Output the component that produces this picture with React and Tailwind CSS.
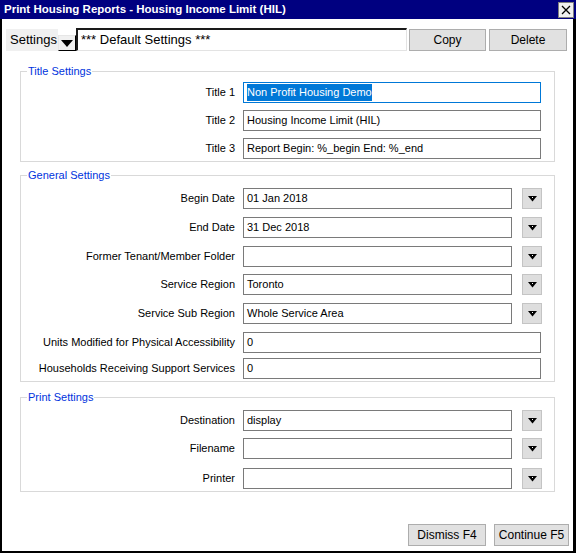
import React from 'react';

const font = { fontFamily: '"Liberation Sans", Arial, sans-serif' };

function Arrow() {
  return (
    <button className="w-[20px] h-[21px] shrink-0 flex items-center justify-center bg-[#dedede] border border-[#c4c4c4]">
      <svg width="9" height="6" viewBox="0 0 9 6">
        <polygon points="0,0 9,0 4.5,5.5" fill="#000" />
        <rect x="4" y="1" width="1" height="1" fill="#fff" />
      </svg>
    </button>
  );
}

function Row({ label, value = '', drop = false, selected = false, className = '' }) {
  return (
    <div className={`flex items-center h-[21px] ${className}`}>
      <div className="w-[214px] shrink-0 text-right text-[11px] text-black">{label}</div>
      <div
        className={`ml-[8px] h-full flex items-center px-[3px] text-[11px] text-black bg-white border ${
          selected ? 'border-[#0078d7]' : 'border-[#7a7a7a]'
        } ${drop ? 'w-[269px]' : 'w-[298px]'}`}
      >
        {selected ? <span className="bg-[#0078d7] text-white">{value}</span> : value}
      </div>
      {drop && <div className="ml-[10px]"><Arrow /></div>}
    </div>
  );
}

function Group({ title, children, className = '' }) {
  return (
    <fieldset className={`mx-[18px] border border-[#d9d9d9] ${className}`}>
      <legend className="ml-[6px] px-[1px] text-[11px] leading-[14px] text-[#0033dd]">{title}</legend>
      {children}
    </fieldset>
  );
}

export default function App() {
  return (
    <div className="w-[576px] h-[553px] bg-white flex flex-col" style={font}>
      <div className="h-[19px] shrink-0 bg-[#000080] flex items-center justify-between pl-[4px] pr-[2px]">
        <span className="text-white font-bold text-[11.5px]">Print Housing Reports - Housing Income Limit (HIL)</span>
        <button className="w-[16px] h-[16px] bg-[#f0f0f0] border border-[#808080] flex items-center justify-center">
          <svg width="10" height="10" viewBox="0 0 10 10">
            <path d="M1 1 L9 9 M9 1 L1 9" stroke="#000" strokeWidth="1.3" />
          </svg>
        </button>
      </div>

      <div className="flex-1 flex flex-col border-l-2 border-r-[3px] border-b-2 border-black">
        <div className="flex items-end mt-[9px] ml-[4px] h-[23px]">
          <div className="w-[52px] h-[22px] bg-[#f0f0f0] flex items-center pl-[4px] text-[13px] text-black">Settings</div>
          <button className="w-[18px] h-[16px] flex items-center justify-center bg-[#f0f0f0] border-r border-b border-black border-t border-l border-t-[#e6e6e6] border-l-[#e6e6e6]">
            <svg width="12" height="7" viewBox="0 0 12 7">
              <polygon points="0,0 12,0 6,7" fill="#000" />
            </svg>
          </button>
          <div className="w-[331px] h-[23px] flex items-center pl-[3px] text-[13px] text-black bg-white border-t-2 border-l-2 border-t-[#1a1a1a] border-l-[#1a1a1a] border-r border-b border-r-[#e3e3e3] border-b-[#e3e3e3]">
            *** Default Settings ***
          </div>
          <button className="ml-[2px] w-[77px] h-[22px] bg-[#e1e1e1] border border-[#adadad] text-[12px] text-black">Copy</button>
          <button className="ml-[3px] w-[78px] h-[22px] bg-[#e1e1e1] border border-[#adadad] text-[12px] text-black">Delete</button>
        </div>

        <Group title="Title Settings" className="mt-[13px] pt-[4px] pb-[2px]">
          <div className="flex flex-col gap-[7px]">
            <Row label="Title 1" value="Non Profit Housing Demo" selected />
            <Row label="Title 2" value="Housing Income Limit (HIL)" />
            <Row label="Title 3" value="Report Begin: %_begin End: %_end" />
          </div>
        </Group>

        <Group title="General Settings" className="mt-[6px] pt-[6px] pb-[2px]">
          <div className="flex flex-col gap-[8px]">
            <Row label="Begin Date" value="01 Jan 2018" drop />
            <Row label="End Date" value="31 Dec 2018" drop />
            <Row label="Former Tenant/Member Folder" drop />
            <Row label="Service Region" value="Toronto" drop className="-mt-[1px]" />
            <Row label="Service Sub Region" value="Whole Service Area" drop />
            <Row label="Units Modified for Physical Accessibility" value="0" />
            <Row label="Households Receiving Support Services" value="0" className="-mt-[3px]" />
          </div>
        </Group>

        <Group title="Print Settings" className="mt-[8px] pt-[6px] pb-[2px]">
          <div className="flex flex-col gap-[7px]">
            <Row label="Destination" value="display" drop />
            <Row label="Filename" drop />
            <Row label="Printer" drop className="mt-[2px]" />
          </div>
        </Group>

        <div className="mt-auto mb-[5px] mr-[4px] flex justify-end gap-[8px]">
          <button className="w-[78px] h-[22px] bg-[#e1e1e1] border border-[#adadad] text-[12px] text-black">Dismiss F4</button>
          <button className="w-[75px] h-[22px] bg-[#e1e1e1] border border-[#adadad] text-[12px] text-black">Continue F5</button>
        </div>
      </div>
    </div>
  );
}
